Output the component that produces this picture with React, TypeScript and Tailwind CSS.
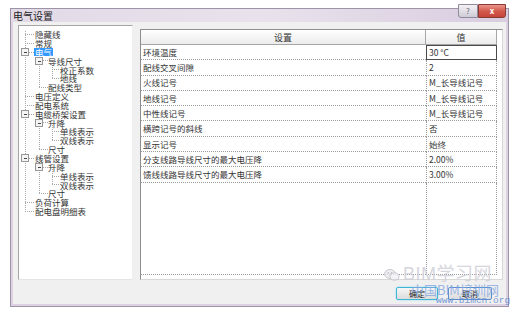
import React from 'react';

const tree = [
  { t: '隐藏线', l: 0 },
  { t: '常规', l: 0 },
  { t: '电气', l: 0, box: true, sel: true },
  { t: '导线尺寸', l: 1, box: true },
  { t: '校正系数', l: 2 },
  { t: '地线', l: 2 },
  { t: '配线类型', l: 1 },
  { t: '电压定义', l: 0 },
  { t: '配电系统', l: 0 },
  { t: '电缆桥架设置', l: 0, box: true },
  { t: '升降', l: 1, box: true },
  { t: '单线表示', l: 2 },
  { t: '双线表示', l: 2 },
  { t: '尺寸', l: 1 },
  { t: '线管设置', l: 0, box: true },
  { t: '升降', l: 1, box: true },
  { t: '单线表示', l: 2 },
  { t: '双线表示', l: 2 },
  { t: '尺寸', l: 1 },
  { t: '负荷计算', l: 0 },
  { t: '配电盘明细表', l: 0 },
];

const rows = [
  ['环境温度', '30 °C'],
  ['配线交叉间隙', '2'],
  ['火线记号', 'M_长导线记号'],
  ['地线记号', 'M_长导线记号'],
  ['中性线记号', 'M_长导线记号'],
  ['横跨记号的斜线', '否'],
  ['显示记号', '始终'],
  ['分支线路导线尺寸的最大电压降', '2.00%'],
  ['馈线线路导线尺寸的最大电压降', '3.00%'],
];

const ROW_H = 8.85;
const TOP = 4;
const LINE_X = [6, 20, 33];
const PAD = ['pl-[16px]', 'pl-[29px]', 'pl-[41px]'];

// tree connector lines
function TreeLines() {
  const cy = (i: number) => TOP + ROW_H / 2 + i * ROW_H;
  const lines: React.ReactNode[] = [];
  const lastRoot = tree.map((n, i) => (n.l === 0 ? i : -1)).filter((i) => i >= 0).pop() || 0;
  lines.push(<line key="root" x1={LINE_X[0]} y1={cy(0) - 3} x2={LINE_X[0]} y2={cy(lastRoot)} />);
  tree.forEach((n, i) => {
    if (n.box) {
      let last = -1;
      for (let j = i + 1; j < tree.length && tree[j].l > n.l; j++) {
        if (tree[j].l === n.l + 1) last = j;
      }
      if (last > 0) {
        lines.push(<line key={'v' + i} x1={LINE_X[n.l + 1]} y1={cy(i)} x2={LINE_X[n.l + 1]} y2={cy(last)} />);
      }
    }
    const x = LINE_X[n.l];
    lines.push(<line key={'h' + i} x1={x} y1={cy(i)} x2={x + 9} y2={cy(i)} />);
  });
  return (
    <svg className="absolute inset-0" width="115" height="255">
      <g stroke="#a8a8a8" strokeWidth="1" strokeDasharray="1 1" shapeRendering="crispEdges">
        {lines}
      </g>
      {tree.map((n, i) =>
        n.box ? (
          <g key={'b' + i} shapeRendering="crispEdges">
            <rect x={LINE_X[n.l] - 3.5} y={Math.round(cy(i)) - 3.5} width="7" height="7" fill="#f4f4f4" stroke="#979797" />
            <line x1={LINE_X[n.l] - 1.5} y1={Math.round(cy(i))} x2={LINE_X[n.l] + 2} y2={Math.round(cy(i))} stroke="#444" />
          </g>
        ) : null
      )}
    </svg>
  );
}

export default function App() {
  return (
    <div className="relative w-[516px] h-[314px] overflow-hidden bg-white font-['Noto_Sans_CJK_SC','Noto_Sans',sans-serif] text-[#333]">
      <div className="ml-[10px] mt-[8px] w-[499px] h-[299px] border border-[#9d94a8] bg-[#dcd2e2] flex flex-col">
        {/* title bar */}
        <div className="h-[13px] flex items-center justify-between bg-gradient-to-r from-[#e2dae7] via-[#e9e2ec] to-[#d9cde0]">
          <span className="pl-[2px] text-[10px] leading-none text-[#222]">电气设置</span>
          <div className="flex items-start self-start -mt-[5px] mr-[2px]">
            <div className="w-[20px] h-[14px] border border-[#8f8b98] rounded-bl-[3px] bg-gradient-to-b from-[#f4f2f6] to-[#cfcbd6] flex items-center justify-center text-[8px] text-[#6a6a78] leading-none">?</div>
            <div className="w-[28px] h-[14px] border border-[#8a3a32] rounded-br-[3px] bg-gradient-to-b from-[#e9938a] via-[#d35a4d] to-[#c4463a] flex items-center justify-center text-[8px] text-white leading-none font-bold">x</div>
          </div>
        </div>
        {/* client area */}
        <div className="flex-1 mx-[2px] mb-[2px] bg-[#f0f0f0] flex flex-col pl-[5px] pr-[2px] pt-[3px]">
          <div className="flex gap-[7px] h-[255px]">
            {/* tree */}
            <div className="relative w-[115px] h-full bg-white border border-[#a6a6a6] border-r-[#f0f0f0] border-b-[#e4e4e4]">
              <TreeLines />
              <div className="relative pt-[4px]">
                {tree.map((n, i) => (
                  <div key={i} className={`h-[8.85px] flex items-center text-[8.5px] leading-none whitespace-nowrap ${PAD[n.l]}`}>
                    {n.sel ? (
                      <span className="bg-[#3399ff] text-white px-[1px] -ml-[1px]">{n.t}</span>
                    ) : (
                      <span>{n.t}</span>
                    )}
                  </div>
                ))}
              </div>
            </div>
            {/* table */}
            <div className="mt-[4px] w-[363px] h-[251px] bg-white border border-[#8e8e8e] border-r-[#d8d8d8] border-b-[#d8d8d8] flex flex-col">
              <div className="flex h-[15px] text-[9px] leading-none">
                <div className="w-[285px] flex items-center justify-center border-b border-r border-[#a6a6a6] bg-gradient-to-b from-white to-[#ececec]">设置</div>
                <div className="w-[71px] flex items-center justify-center border-b border-r border-[#a6a6a6] bg-gradient-to-b from-white to-[#ececec]">值</div>
              </div>
              {rows.map(([k, v], i) => (
                <div key={i} className="flex h-[15.3px] text-[8.5px] leading-none">
                  <div className="w-[285px] flex items-center pl-[2px] border-b border-dotted border-[#9c9c9c]">{k}</div>
                  {i === 0 ? (
                    <div className="w-[71px] flex items-center pl-[2px] border border-[#4a4a4a]">{v}</div>
                  ) : (
                    <div className="w-[71px] flex items-center pl-[2px] border-b border-l border-r border-dotted border-[#9c9c9c]">{v}</div>
                  )}
                </div>
              ))}
              <div className="flex h-[92px]">
                <div className="w-[285px] border-b border-dotted border-[#9c9c9c]" />
                <div className="w-[71px] border-b border-l border-r border-dotted border-[#9c9c9c]" />
              </div>
            </div>
          </div>
          {/* buttons */}
          <div className="flex justify-end gap-[10px] pr-[12px] mt-[7px]">
            <div className="w-[42px] h-[13px] rounded-[2px] border border-[#3fb5d6] shadow-[0_0_2px_#7fd9ef] bg-gradient-to-b from-[#f6f6f6] to-[#dcdcdc] flex items-center justify-center text-[8px] leading-none text-[#222]">确定</div>
            <div className="w-[44px] h-[13px] rounded-[2px] border border-[#5a8fcf] bg-gradient-to-b from-[#f6f6f6] to-[#dcdcdc] flex items-center justify-center text-[8px] leading-none text-[#222]">取消</div>
          </div>
        </div>
      </div>
      {/* watermark */}
      <div className="absolute left-[384px] top-[265px] w-[130px] h-[44px] pointer-events-none">
        <div className="flex items-center gap-[3px] opacity-80">
          <svg width="16" height="13" viewBox="0 0 16 13">
            <ellipse cx="6" cy="6" rx="5.5" ry="4.5" fill="#ececf0" stroke="#b0b0b8" strokeWidth="0.8" />
            <ellipse cx="10.5" cy="8.5" rx="4.5" ry="3.6" fill="#f2f2f5" stroke="#b0b0b8" strokeWidth="0.8" />
            <circle cx="4.2" cy="5" r="0.8" fill="#a0a0a8" />
            <circle cx="7.5" cy="5" r="0.8" fill="#a0a0a8" />
          </svg>
          <span className="text-[18px] leading-none tracking-[0.5px] text-[#cdccd6] font-['Liberation_Sans','Noto_Sans_CJK_SC',sans-serif]">BIM学习网</span>
        </div>
        <div className="pl-[27px] mt-[0px] text-[13px] leading-none text-[#7fa3e0] opacity-75 whitespace-nowrap">中国BIM培训网</div>
        <div className="pl-[52px] mt-[0px] text-[9.5px] leading-none text-[#5d86cf] opacity-80 font-['Liberation_Mono',monospace] whitespace-nowrap">www.bimcn.org</div>
      </div>
    </div>
  );
}
